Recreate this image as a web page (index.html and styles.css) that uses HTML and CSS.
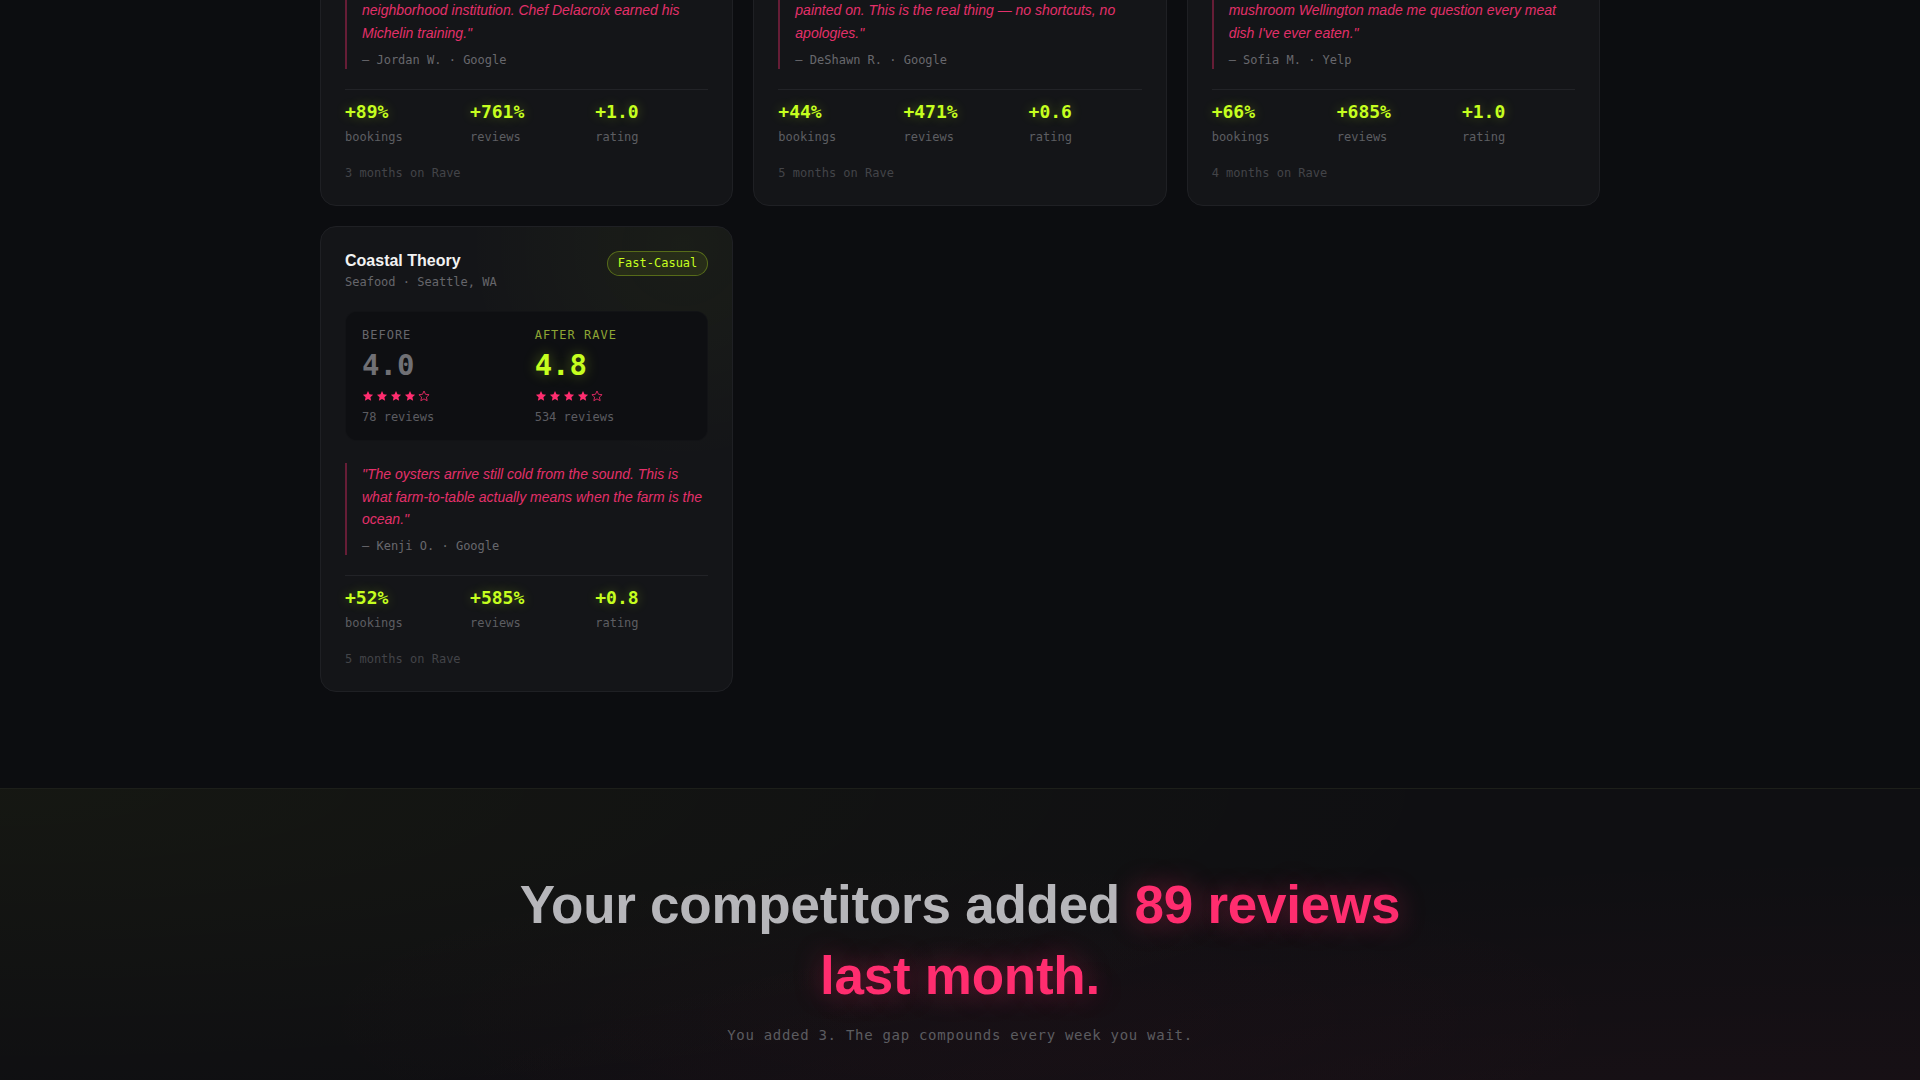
FILE: index.html
```html
<!DOCTYPE html>
<html lang="en">
<head>
  <meta charset="UTF-8">
  <title>Rave — Results</title>
  <meta name="viewport" content="width=device-width, initial-scale=1.0">
  <link rel="stylesheet" href="styles.css">
</head>
<body>
  <svg width="0" height="0" class="defs">
    <symbol id="star" viewBox="0 0 24 24">
      <path d="M12 2l3 6.6 7.2.8-5.4 4.9 1.5 7.1L12 17.8l-6.3 3.6 1.5-7.1L1.8 9.4 9 8.6z"/>
    </symbol>
  </svg>

  <section class="results">
    <div class="grid">

      <div class="card">
        <div class="card-head">
          <div>
            <div class="name">Maison Delacroix</div>
            <div class="meta">French · Portland, OR</div>
          </div>
          <span class="tag">Fine Dining</span>
        </div>
        <div class="compare">
          <div class="side">
            <div class="label">Before</div>
            <div class="score">3.7</div>
            <div class="stars">
              <svg class="star"><use href="#star"/></svg><svg class="star"><use href="#star"/></svg><svg class="star"><use href="#star"/></svg><svg class="star off"><use href="#star"/></svg><svg class="star off"><use href="#star"/></svg>
            </div>
            <div class="count">41 reviews</div>
          </div>
          <div class="side after">
            <div class="label">After Rave</div>
            <div class="score">4.7</div>
            <div class="stars">
              <svg class="star"><use href="#star"/></svg><svg class="star"><use href="#star"/></svg><svg class="star"><use href="#star"/></svg><svg class="star"><use href="#star"/></svg><svg class="star off"><use href="#star"/></svg>
            </div>
            <div class="count">353 reviews</div>
          </div>
        </div>
        <blockquote class="quote">
          <p>"Twelve tables that quietly turned into a<br>neighborhood institution. Chef Delacroix earned his Michelin training."</p>
          <cite>— Jordan W. · Google</cite>
        </blockquote>
        <div class="stats">
          <div><div class="val">+89%</div><div class="key">bookings</div></div>
          <div><div class="val">+761%</div><div class="key">reviews</div></div>
          <div><div class="val">+1.0</div><div class="key">rating</div></div>
        </div>
        <div class="since">3 months on Rave</div>
      </div>

      <div class="card">
        <div class="card-head">
          <div>
            <div class="name">Hickory &amp; Ash</div>
            <div class="meta">BBQ · Austin, TX</div>
          </div>
          <span class="tag">Casual</span>
        </div>
        <div class="compare">
          <div class="side">
            <div class="label">Before</div>
            <div class="score">4.1</div>
            <div class="stars">
              <svg class="star"><use href="#star"/></svg><svg class="star"><use href="#star"/></svg><svg class="star"><use href="#star"/></svg><svg class="star"><use href="#star"/></svg><svg class="star off"><use href="#star"/></svg>
            </div>
            <div class="count">62 reviews</div>
          </div>
          <div class="side after">
            <div class="label">After Rave</div>
            <div class="score">4.7</div>
            <div class="stars">
              <svg class="star"><use href="#star"/></svg><svg class="star"><use href="#star"/></svg><svg class="star"><use href="#star"/></svg><svg class="star"><use href="#star"/></svg><svg class="star off"><use href="#star"/></svg>
            </div>
            <div class="count">354 reviews</div>
          </div>
        </div>
        <blockquote class="quote">
          <p>"Real post-oak smoke, and the bark isn't<br>painted on. This is the real thing — no shortcuts, no apologies."</p>
          <cite>— DeShawn R. · Google</cite>
        </blockquote>
        <div class="stats">
          <div><div class="val">+44%</div><div class="key">bookings</div></div>
          <div><div class="val">+471%</div><div class="key">reviews</div></div>
          <div><div class="val">+0.6</div><div class="key">rating</div></div>
        </div>
        <div class="since">5 months on Rave</div>
      </div>

      <div class="card">
        <div class="card-head">
          <div>
            <div class="name">Verdant Table</div>
            <div class="meta">Plant-Based · Denver, CO</div>
          </div>
          <span class="tag">Casual</span>
        </div>
        <div class="compare">
          <div class="side">
            <div class="label">Before</div>
            <div class="score">3.8</div>
            <div class="stars">
              <svg class="star"><use href="#star"/></svg><svg class="star"><use href="#star"/></svg><svg class="star"><use href="#star"/></svg><svg class="star off"><use href="#star"/></svg><svg class="star off"><use href="#star"/></svg>
            </div>
            <div class="count">54 reviews</div>
          </div>
          <div class="side after">
            <div class="label">After Rave</div>
            <div class="score">4.8</div>
            <div class="stars">
              <svg class="star"><use href="#star"/></svg><svg class="star"><use href="#star"/></svg><svg class="star"><use href="#star"/></svg><svg class="star"><use href="#star"/></svg><svg class="star off"><use href="#star"/></svg>
            </div>
            <div class="count">424 reviews</div>
          </div>
        </div>
        <blockquote class="quote">
          <p>"I came in a skeptic. The roasted<br>mushroom Wellington made me question every meat dish I've ever eaten."</p>
          <cite>— Sofia M. · Yelp</cite>
        </blockquote>
        <div class="stats">
          <div><div class="val">+66%</div><div class="key">bookings</div></div>
          <div><div class="val">+685%</div><div class="key">reviews</div></div>
          <div><div class="val">+1.0</div><div class="key">rating</div></div>
        </div>
        <div class="since">4 months on Rave</div>
      </div>

      <div class="card">
        <div class="card-head">
          <div>
            <div class="name">Coastal Theory</div>
            <div class="meta">Seafood · Seattle, WA</div>
          </div>
          <span class="tag">Fast-Casual</span>
        </div>
        <div class="compare">
          <div class="side">
            <div class="label">Before</div>
            <div class="score">4.0</div>
            <div class="stars">
              <svg class="star"><use href="#star"/></svg><svg class="star"><use href="#star"/></svg><svg class="star"><use href="#star"/></svg><svg class="star"><use href="#star"/></svg><svg class="star off"><use href="#star"/></svg>
            </div>
            <div class="count">78 reviews</div>
          </div>
          <div class="side after">
            <div class="label">After Rave</div>
            <div class="score">4.8</div>
            <div class="stars">
              <svg class="star"><use href="#star"/></svg><svg class="star"><use href="#star"/></svg><svg class="star"><use href="#star"/></svg><svg class="star"><use href="#star"/></svg><svg class="star off"><use href="#star"/></svg>
            </div>
            <div class="count">534 reviews</div>
          </div>
        </div>
        <blockquote class="quote">
          <p>"The oysters arrive still cold from the sound. This is what farm-to-table actually means when the farm is the ocean."</p>
          <cite>— Kenji O. · Google</cite>
        </blockquote>
        <div class="stats">
          <div><div class="val">+52%</div><div class="key">bookings</div></div>
          <div><div class="val">+585%</div><div class="key">reviews</div></div>
          <div><div class="val">+0.8</div><div class="key">rating</div></div>
        </div>
        <div class="since">5 months on Rave</div>
      </div>

    </div>
  </section>

  <section class="cta">
    <h2>Your competitors added <span class="hot">89 reviews last month.</span></h2>
    <p class="sub">You added 3. The gap compounds every week you wait.</p>
  </section>
</body>
</html>
```

FILE: styles.css
```css
body {
  margin: 0;
  background: #0c0d10;
  color: #eee;
  font-family: "Liberation Sans", Arial, sans-serif;
}

.defs {
  position: absolute;
}

.results {
  margin-top: -260px;
  padding-bottom: 96px;
}

.grid {
  width: 1280px;
  margin: 0 auto;
  display: grid;
  grid-template-columns: repeat(3, 1fr);
  gap: 20px;
}

.card {
  background:
    radial-gradient(circle at 88% 4%, rgba(198, 255, 31, 0.035), transparent 38%),
    #141518;
  border: 1px solid #1f2024;
  border-radius: 16px;
  padding: 24px 24px 23px;
}

.card-head {
  display: flex;
  justify-content: space-between;
  align-items: flex-start;
}

.name {
  font-size: 16px;
  font-weight: bold;
  line-height: 20px;
  color: #f2f2f2;
}

.meta {
  font-family: "DejaVu Sans Mono", monospace;
  font-size: 12px;
  line-height: 18px;
  margin-top: 2px;
  color: #66666b;
}

.tag {
  font-family: "DejaVu Sans Mono", monospace;
  font-size: 12px;
  line-height: 15px;
  padding: 4px 10px;
  border-radius: 999px;
  color: #c6ff1f;
  background: rgba(198, 255, 31, 0.08);
  border: 1px solid rgba(198, 255, 31, 0.3);
}

/* Before / after box */
.compare {
  margin-top: 20px;
  background: #0e0f12;
  border: 1px solid rgba(255, 255, 255, 0.02);
  border-radius: 12px;
  padding: 16px 16px 14px;
  display: grid;
  grid-template-columns: 1fr 1fr;
  gap: 16px;
  font-family: "DejaVu Sans Mono", monospace;
}

.label {
  font-size: 12px;
  line-height: 14px;
  letter-spacing: 1px;
  text-transform: uppercase;
  color: #67676c;
}

.score {
  font-size: 29px;
  font-weight: bold;
  line-height: 36px;
  margin-top: 5px;
  color: #707075;
}

.stars {
  display: flex;
  gap: 2px;
  height: 14px;
  align-items: center;
  margin-top: 6px;
}

.star {
  width: 12px;
  height: 12px;
  fill: #ff2d6f;
}

.star.off {
  fill: none;
  stroke: #ff2d6f;
  stroke-width: 1.6;
}

.count {
  font-size: 12px;
  line-height: 18px;
  margin-top: 5px;
  color: #5c5c61;
}

.after .label {
  color: #8da534;
}

.after .score {
  color: #c6ff1f;
  text-shadow: 0 0 14px rgba(198, 255, 31, 0.35);
}

/* Review quote */
.quote {
  margin: 22px 0 0;
  border-left: 2px solid rgba(255, 45, 111, 0.35);
  padding-left: 15px;
}

.quote p {
  margin: 0;
  font-size: 14px;
  font-style: italic;
  line-height: 22.4px;
  color: #e3306a;
}

.quote cite {
  display: block;
  margin-top: 7px;
  font-family: "DejaVu Sans Mono", monospace;
  font-style: normal;
  font-size: 12px;
  line-height: 18px;
  color: #68686d;
}

/* Growth numbers */
.stats {
  margin-top: 20px;
  border-top: 1px solid #222327;
  padding-top: 11px;
  display: grid;
  grid-template-columns: repeat(3, 1fr);
  gap: 12px;
  font-family: "DejaVu Sans Mono", monospace;
}

.val {
  font-size: 18px;
  font-weight: bold;
  line-height: 22px;
  color: #c6ff1f;
  text-shadow: 0 0 12px rgba(198, 255, 31, 0.3);
}

.key {
  font-size: 12px;
  line-height: 18px;
  margin-top: 5px;
  color: #5d5e62;
}

.since {
  font-family: "DejaVu Sans Mono", monospace;
  font-size: 12px;
  line-height: 18px;
  margin-top: 18px;
  color: #434448;
}

/* Closing call-out */
.cta {
  border-top: 1px solid #1d1f1a;
  padding: 80px 24px 160px;
  text-align: center;
  background:
    radial-gradient(ellipse at 0% 0%, rgba(198, 255, 31, 0.035), transparent 55%),
    radial-gradient(ellipse at 100% 100%, rgba(255, 45, 111, 0.05), transparent 60%),
    radial-gradient(ellipse at 50% 55%, rgba(255, 45, 111, 0.025), transparent 50%),
    #0f0f12;
}

.cta h2 {
  max-width: 940px;
  margin: 0 auto;
  font-size: 53px;
  line-height: 71px;
  letter-spacing: -0.25px;
  font-weight: bold;
  color: #b6b6ba;
}

.hot {
  color: #ff2d6f;
  text-shadow: 0 0 28px rgba(255, 45, 111, 0.4);
}

.sub {
  margin: 14px 0 0;
  font-family: "DejaVu Sans Mono", monospace;
  font-size: 14px;
  line-height: 21px;
  letter-spacing: 0.7px;
  color: #5c5c60;
}
```
